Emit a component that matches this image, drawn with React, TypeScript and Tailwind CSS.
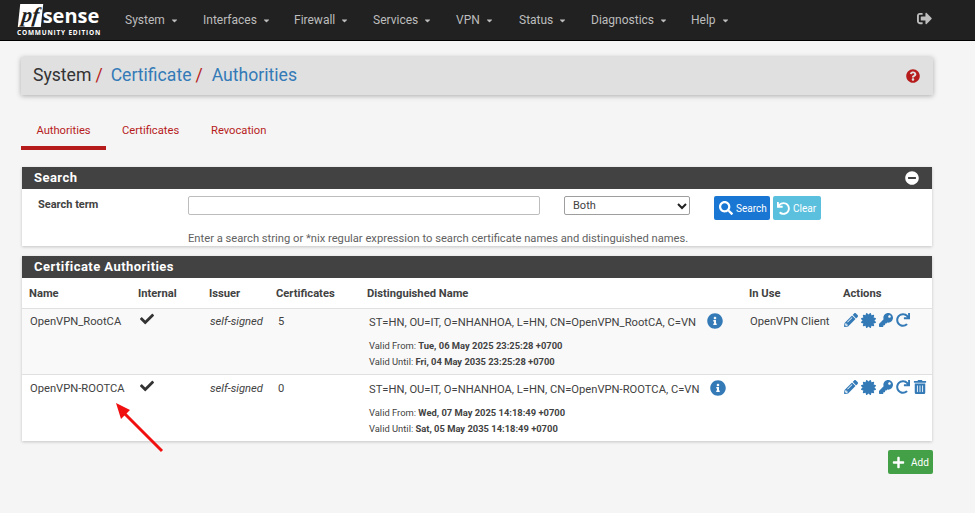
import {
  FaCaretDown,
  FaCertificate,
  FaCheck,
  FaInfoCircle,
  FaKey,
  FaMinusCircle,
  FaPencilAlt,
  FaPlus,
  FaQuestionCircle,
  FaRedo,
  FaSearch,
  FaSignOutAlt,
  FaTrashAlt,
  FaUndo,
} from "react-icons/fa";

const menu = [
  { label: "System", width: "w-[78px]" },
  { label: "Interfaces", width: "w-[91px]" },
  { label: "Firewall", width: "w-[79px]" },
  { label: "Services", width: "w-[83px]" },
  { label: "VPN", width: "w-[63px]" },
  { label: "Status", width: "w-[72px]" },
  { label: "Diagnostics", width: "w-[100px]" },
  { label: "Help", width: "w-[60px]" },
];

const rows = [
  {
    name: "OpenVPN_RootCA",
    count: "5",
    dn: "ST=HN, OU=IT, O=NHANHOA, L=HN, CN=OpenVPN_RootCA, C=VN",
    from: "Tue, 06 May 2025 23:25:28 +0700",
    until: "Fri, 04 May 2035 23:25:28 +0700",
    inUse: "OpenVPN Client",
    canDelete: false,
  },
  {
    name: "OpenVPN-ROOTCA",
    count: "0",
    dn: "ST=HN, OU=IT, O=NHANHOA, L=HN, CN=OpenVPN-ROOTCA, C=VN",
    from: "Wed, 07 May 2025 14:18:49 +0700",
    until: "Sat, 05 May 2035 14:18:49 +0700",
    inUse: "",
    canDelete: true,
  },
];

function Logo() {
  return (
    <div className="flex w-[86px] flex-col items-center">
      <div className="flex h-[24px] items-center">
        <div className="flex h-[23px] w-[23px] -skew-x-6 items-center justify-center bg-white">
          <span className="text-[21px] leading-none font-bold text-[#212121] italic [font-family:'Liberation_Serif',serif]">
            pf
          </span>
        </div>
        <span className="ml-px text-[20px] leading-none font-bold text-white [font-family:'Open_Sans',sans-serif]">
          sense
        </span>
      </div>
      <span className="mt-[1px] text-[6.5px] leading-[8px] font-bold tracking-[0.8px] whitespace-nowrap text-white [font-family:'Open_Sans',sans-serif]">
        COMMUNITY EDITION
      </span>
    </div>
  );
}

function Navbar() {
  return (
    <nav className="flex h-[41px] items-center border-b border-black bg-[#212121]">
      <div className="ml-[16px]">
        <Logo />
      </div>
      <div className="ml-[23px] flex">
        {menu.map((item) => (
          <div
            key={item.label}
            className={`flex items-center text-[12px] text-[#bdbdbd] ${item.width}`}
          >
            {item.label}
            <FaCaretDown className="ml-[5px] text-[9px]" />
          </div>
        ))}
      </div>
      <FaSignOutAlt className="mr-[43px] ml-auto -translate-y-[2px] text-[15px] text-[#bdbdbd]" />
    </nav>
  );
}

function Breadcrumb() {
  return (
    <div className="mt-[16px] flex h-[38px] items-center justify-between bg-[#e0e0e0] pr-[13px] pl-[12px] shadow-[0_1px_5px_rgba(0,0,0,0.3)]">
      <div className="pb-[1px] text-[17.6px] text-[#333333]">
        System
        <span className="mr-[8px] ml-[4px] text-[#b71c1c]">/</span>
        <span className="text-[#337ab7]">Certificate</span>
        <span className="mr-[9px] ml-[4px] text-[#b71c1c]">/</span>
        <span className="text-[#337ab7]">Authorities</span>
      </div>
      <FaQuestionCircle className="text-[14px] text-[#b71c1c]" />
    </div>
  );
}

function Tabs() {
  return (
    <div className="mt-[21px] flex text-[11.2px] text-[#b71c1c]">
      <div className="flex h-[34px] w-[85px] items-start justify-center border-b-[4px] border-[#b71c1c] pt-[7px]">
        Authorities
      </div>
      <div className="w-[89px] pt-[7px] pl-[16px]">Certificates</div>
      <div className="pt-[7px] pl-[16px]">Revocation</div>
    </div>
  );
}

function PanelHeading({ title, collapse }: { title: string; collapse?: boolean }) {
  return (
    <div className="flex h-[22px] items-center justify-between bg-[#424242] pr-[13px] pl-[12px] text-[13px] font-bold tracking-[0.45px] text-white">
      {title}
      {collapse && <FaMinusCircle className="text-[14px]" />}
    </div>
  );
}

function SearchPanel() {
  return (
    <section className="mx-px mt-[17px] bg-white shadow-[0_1px_3px_rgba(0,0,0,0.2)]">
      <PanelHeading title="Search" collapse />
      <div className="h-[57px]">
        <div className="flex items-start pt-[7px]">
          <div className="w-[166px] pt-[1px] pl-[16px] text-[11px] font-bold text-[#424242]">
            Search term
          </div>
          <div className="h-[19px] w-[352px] rounded-[2px] border border-[#bdbdbd] bg-white" />
          <div className="ml-[24px] flex h-[19px] w-[126px] items-center justify-between rounded-[2px] border border-[#9e9e9e] pt-px pr-[1px] pl-[8px] text-[11px] text-[#424242]">
            Both
            <svg width="12" height="12" viewBox="0 0 12 12" fill="none" stroke="#212121" strokeWidth="2">
              <path d="M2 4l4 4 4-4" />
            </svg>
          </div>
          <button className="ml-[24px] flex h-[24px] w-[56px] items-center rounded-[2px] bg-[#1976d2] pl-[5px] text-[10px] text-white">
            <FaSearch className="mr-[3px] text-[14px]" />
            Search
          </button>
          <button className="ml-[3px] flex h-[24px] w-[48px] items-center rounded-[2px] bg-[#5bc0de] pl-[4px] text-[10px] text-white">
            <FaUndo className="mr-[3px] text-[13px]" />
            Clear
          </button>
        </div>
        <p className="mt-[12px] pl-[166px] text-[11.2px] leading-[13px] text-[#616161]">
          Enter a search string or *nix regular expression to search certificate names and distinguished names.
        </p>
      </div>
    </section>
  );
}

function ActionIcons({ canDelete }: { canDelete: boolean }) {
  return (
    <div className="-mt-px flex items-center gap-[3px] pl-px text-[14px] text-[#337ab7]">
      <FaPencilAlt />
      <FaCertificate className="text-[15px]" />
      <FaKey />
      <FaRedo />
      {canDelete && <FaTrashAlt />}
    </div>
  );
}

function CaTable() {
  return (
    <section className="mx-px mt-[10px] bg-white shadow-[0_1px_3px_rgba(0,0,0,0.2)]">
      <PanelHeading title="Certificate Authorities" />
      <table className="w-full table-fixed border-collapse text-[11.2px] text-[#424242]">
        <colgroup>
          <col className="w-[116px]" />
          <col className="w-[71px]" />
          <col className="w-[67px]" />
          <col className="w-[91px]" />
          <col className="w-[382px]" />
          <col className="w-[94px]" />
          <col />
        </colgroup>
        <thead>
          <tr className="h-[30px] border-b border-[#e0e0e0] text-left font-bold [&>th]:pt-[4px]">
            <th className="pl-[7px]">Name</th>
            <th>Internal</th>
            <th>Issuer</th>
            <th>Certificates</th>
            <th>Distinguished Name</th>
            <th>In Use</th>
            <th>Actions</th>
          </tr>
        </thead>
        <tbody>
          {rows.map((row, index) => {
            const top = index === 0 ? "pt-[5px]" : "pt-[6px]";
            return (
              <tr
                key={row.name}
                className={`align-top ${index === 0 ? "h-[66px] border-b border-[#e0e0e0] bg-[#f9f9f9]" : "h-[67px]"}`}
              >
                <td className={`${top} pl-[8px] leading-[16px]`}>{row.name}</td>
                <td className={top}>
                  <FaCheck className="-mt-[2px] ml-[2px] text-[14px] text-[#333333]" />
                </td>
                <td className={`${top} pl-[1px] leading-[16px] italic`}>self-signed</td>
                <td className={`${top} pl-[2px] leading-[16px]`}>{row.count}</td>
                <td className={`${top} pl-[2px]`}>
                  <div className="flex h-[16px] items-center leading-[16px]">
                    <span className="pt-[2px]">{row.dn}</span>
                    <FaInfoCircle className="ml-[11px] -translate-y-[1px] text-[16px] text-[#337ab7]" />
                  </div>
                  <div className="mt-[8px] text-[9.4px] leading-[16px]">
                    Valid From: <b>{row.from}</b>
                    <br />
                    Valid Until: <b>{row.until}</b>
                  </div>
                </td>
                <td className={`${top} pl-px leading-[16px]`}>{row.inUse}</td>
                <td className={top}>
                  <ActionIcons canDelete={row.canDelete} />
                </td>
              </tr>
            );
          })}
        </tbody>
      </table>
    </section>
  );
}

export default function App() {
  return (
    <div className="relative h-[513px] overflow-hidden bg-[#f5f5f5] [font-family:Roboto,sans-serif]">
      <Navbar />
      <main className="ml-[21px] w-[912px]">
        <Breadcrumb />
        <Tabs />
        <SearchPanel />
        <CaTable />
        <div className="mt-[9px] flex justify-end">
          <button className="flex h-[24px] w-[45px] items-center rounded-[2px] bg-[#43a047] pl-[4px] text-[10px] text-white">
            <FaPlus className="mr-[6px] text-[13px]" />
            Add
          </button>
        </div>
      </main>
      {/* red annotation arrow drawn over the screenshot */}
      <svg className="absolute top-[400px] left-[110px]" width="60" height="56" viewBox="0 0 60 56">
        <path d="M52 51L13 12" stroke="#f01010" strokeWidth="3" />
        <path d="M6 3L20 10L11 19Z" fill="#f01010" />
      </svg>
    </div>
  );
}
